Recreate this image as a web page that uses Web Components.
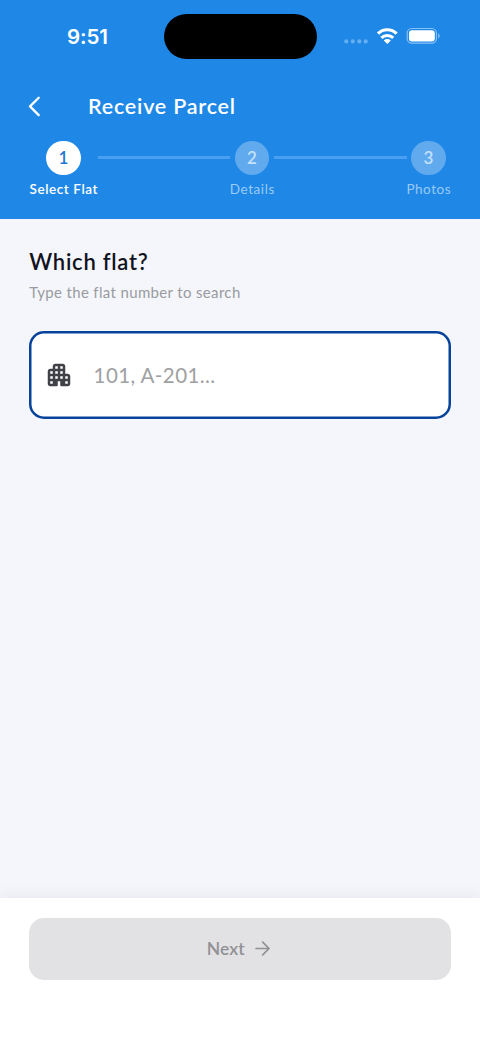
<!DOCTYPE html>
<html lang="en">
<head>
<meta charset="utf-8">
<title>Receive Parcel</title>
<style>
html,body{margin:0;height:100%}
body{font-family:Lato,"Open Sans",sans-serif;overflow:hidden;background:#f4f6fb}
</style>
</head>
<body>
<parcel-page></parcel-page>
<script>
const define = (name, html, setup) => customElements.define(name, class extends HTMLElement {
  connectedCallback() {
    if (this.shadowRoot) return;
    const t = document.createElement('template');
    t.innerHTML = html;
    this.attachShadow({mode: 'open'}).append(t.content.cloneNode(true));
    if (setup) setup.call(this, this.shadowRoot);
  }
});

/* Single-line text tracked out to a given advance width. */
define('fit-text', `<style>:host{display:block;white-space:nowrap;flex:none}span{display:inline-block}</style><span><slot></slot></span>`,
  function (root) {
    const w = parseFloat(this.getAttribute('w')), span = root.querySelector('span');
    const gap = (w - span.getBoundingClientRect().width) / (this.textContent.length - 1);
    this.style.width = w + 'px';
    span.style.letterSpacing = gap + 'px';
  });

define('status-bar', `<style>
:host{display:grid;grid-template-columns:163.5px 153px 1fr;height:72px;align-items:center;color:#fff}
.time{font:600 20.5px/24px Inter,sans-serif;padding:1px 0 0 67px}
.island{height:45px;border-radius:23px;background:#000}
.right{display:flex;align-items:center;padding-left:26.5px}
svg{display:block;flex:none}
</style>
<div class="time"><fit-text w="41">9:51</fit-text></div>
<div class="island"></div>
<div class="right">
<svg width="97" height="18" viewBox="0 0 97 18">
<g fill="#66aff1"><circle cx="3.3" cy="14.4" r="2.05"/><circle cx="9.8" cy="14.4" r="2.05"/><circle cx="16.3" cy="14.4" r="2.05"/><circle cx="22.7" cy="14.4" r="2.05"/></g>
<g fill="none" stroke="#fff" stroke-width="3.1"><path d="M35 6.7a13 13 0 0 1 18.6 0"/><path d="M38.4 10.9a8.3 8.3 0 0 1 11.8 0"/></g>
<path fill="#fff" d="M40.8 13.4a5 5 0 0 1 7 0l-3.5 3.6z"/>
<rect x="64.2" y="1.5" width="29.2" height="14.6" rx="4.6" fill="none" stroke="#86c0f5" stroke-width="1.2"/>
<rect x="66" y="3.3" width="25.8" height="11.2" rx="3" fill="#fff"/>
<path fill="#86c0f5" d="M95.2 6.2c2 .9 2 4.3 0 5.2z"/>
</svg></div>`);

define('nav-bar', `<style>
:host{display:flex;align-items:center;height:68px;color:#fff;padding-left:24px}
svg{width:20px;height:24px;margin-right:44px}
fit-text{font-weight:600;font-size:21.5px;line-height:28px}
</style>
<svg viewBox="0 0 20 24" fill="none" stroke="#fff" stroke-width="2.3" stroke-linecap="round" stroke-linejoin="round"><path d="M14.7 3.8 6 12.4l8.7 8.7"/></svg>
<fit-text w="147"><slot></slot></fit-text>`, function (root) {
  /* the title is passed straight through so that its tracking can be measured */
  const old = root.querySelector('fit-text'), f = document.createElement('fit-text');
  f.setAttribute('w', '147'); f.textContent = this.textContent; old.replaceWith(f);
});

define('step-item', `<style>
:host{display:flex;flex-direction:column;align-items:center;flex:none;color:#9bcaf6;font-size:13.5px}
:host([active]){color:#fff;font-weight:600}
i{font-style:normal;width:34.5px;height:34.5px;border-radius:50%;background:#62aaee;color:#c4e1fb;display:grid;place-items:center;font-size:17px;font-weight:600;line-height:20px;padding-top:1px;box-sizing:border-box}
:host([active]) i{background:#fff;color:#1f78cf}
slot{display:block;line-height:18px;margin-top:5px}
</style><i></i><slot></slot>`, function (root) { root.querySelector('i').textContent = this.getAttribute('n'); });

define('step-bar', `<style>
:host{display:flex;padding:.5px 29.5px 0;height:78px}
hr{flex:1;border:0;margin:15.5px 0 0;height:3px;background:#4a9ff0}
</style>
<step-item n="1" active><fit-text w="68">Select Flat</fit-text></step-item><hr>
<step-item n="2"><fit-text w="44.5">Details</fit-text></step-item><hr>
<step-item n="3"><fit-text w="44">Photos</fit-text></step-item>`);

define('flat-field', `<style>
:host{display:flex;align-items:center;box-sizing:border-box;height:87.5px;box-shadow:inset 0 0 0 2.5px #07429b;border-radius:15px;background:#fff;padding-left:14.3px;color:#a0a0a3}
svg{width:30px;height:30px;margin-right:20px}
fit-text{font-size:20.5px;line-height:28px;font-weight:400}
</style>
<svg viewBox="0 0 24 24" fill="#414247"><path d="M17 11V5c0-1.1-.9-2-2-2H9c-1.1 0-2 .9-2 2v2H5c-1.1 0-2 .9-2 2v10c0 1.1.9 2 2 2h5c.55 0 1-.45 1-1v-3h2v3c0 .55.45 1 1 1h5c1.1 0 2-.9 2-2v-6c0-1.1-.9-2-2-2h-2zM7 19H5v-2h2v2zm0-4H5v-2h2v2zm0-4H5V9h2v2zm4 4H9v-2h2v2zm0-4H9V9h2v2zm0-4H9V5h2v2zm4 8h-2v-2h2v2zm0-4h-2V9h2v2zm0-4h-2V5h2v2zm4 12h-2v-2h2v2zm0-4h-2v-2h2v2z"/></svg>
<fit-text w="121.5">101, A-201...</fit-text>`);

define('next-button', `<style>
:host{display:flex;align-items:center;justify-content:center;height:62px;border-radius:15px;background:#e2e2e4;color:#919195;gap:10.5px;padding-right:3px}
fit-text{font-size:17.5px;line-height:22px;font-weight:600;padding-top:1px}
svg{width:15px;height:15px}
</style>
<fit-text w="38">Next</fit-text>
<svg viewBox="0 0 15 15" fill="none" stroke="#919195" stroke-width="1.7" stroke-linecap="round" stroke-linejoin="round"><path d="M1 7.5h13M7.7 1.2 14 7.5l-6.3 6.3"/></svg>`);

define('parcel-page', `<style>
:host{display:flex;flex-direction:column;height:1041px;width:480px}
header{background:#1f88e7;height:218.5px;flex:none}
main{flex:1;padding:29px 29.3px 0}
.h{font-size:22px;line-height:28px;font-weight:600;color:#12131e}
.s{font-size:15px;line-height:20px;color:#999b9f;margin:6px 0 29.8px}
footer{flex:none;box-sizing:border-box;height:143.3px;padding:20px 29.3px 0;background:#fff;box-shadow:0 -4px 14px rgba(0,0,0,.05)}
</style>
<header><status-bar></status-bar><nav-bar>Receive Parcel</nav-bar><step-bar></step-bar></header>
<main><fit-text class="h" w="118.5">Which flat?</fit-text><fit-text class="s" w="211">Type the flat number to search</fit-text><flat-field></flat-field></main>
<footer><next-button></next-button></footer>`);
</script>
</body>
</html>
